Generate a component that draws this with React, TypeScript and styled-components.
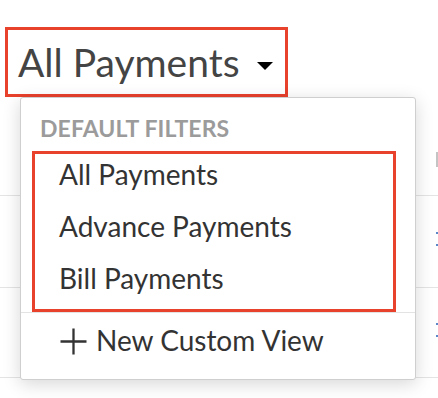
import React from "react";
import styled, { createGlobalStyle } from "styled-components";

const GlobalStyle = createGlobalStyle`
  html, body { margin: 0; padding: 0; background: #fff; }
  body { font-family: Lato, "Open Sans", sans-serif; }
`;

const Page = styled.div`
  position: relative;
  width: 438px;
  height: 398px;
  overflow: hidden;
  background: #fff;
`;

const Header = styled.div`
  display: flex;
  padding: 27px 0 0 5px;
`;

const TitleButton = styled.div`
  display: flex;
  align-items: center;
  height: 64px;
  padding: 0 12px 0 10px;
  border: 3px solid #e8412c;
  color: #444;
  font-size: 39px;
  line-height: 1;
`;

const TitleText = styled.span`
  display: block;
`;

const Caret = styled.span`
  width: 0;
  height: 0;
  margin: 8px 0 0 17px;
  border-left: 8px solid transparent;
  border-right: 8px solid transparent;
  border-top: 8px solid #000;
`;

const Table = styled.div`
  display: flex;
  flex-direction: column;
`;

const Row = styled.div<{ $h: number }>`
  display: flex;
  justify-content: flex-end;
  height: ${(p) => p.$h}px;
  box-sizing: border-box;
  border-bottom: 1px solid #e4e4e4;
`;

const Edge = styled.div<{ $top: number }>`
  display: flex;
  flex-direction: column;
  gap: 10px;
  width: 2px;
  padding-top: ${(p) => p.$top}px;
`;

const GrayMark = styled.span`
  width: 2px;
  height: 15px;
  background: #c4c4c4;
`;

const BlueDot = styled.span`
  width: 2px;
  height: 2px;
  background: #5b86c8;
`;

const Menu = styled.div`
  position: absolute;
  left: 20px;
  top: 97px;
  width: 396px;
  height: 283px;
  box-sizing: border-box;
  background: #fff;
  border: 1px solid #cfcfcf;
  border-radius: 3px;
  box-shadow: 0 4px 18px rgba(0, 0, 0, 0.16);
  display: flex;
  flex-direction: column;
`;

const GroupLabel = styled.div`
  padding: 16px 0 0 19px;
  font-size: 23px;
  line-height: 28px;
  font-weight: 700;
  color: #9b9b9b;
  letter-spacing: 0.1px;
`;

const Group = styled.div`
  display: flex;
  flex-direction: column;
  gap: 12px;
  margin: 9px 19px 0 11px;
  padding: 0 0 11px 24px;
  border: 3px solid #e8412c;
`;

const Item = styled.div`
  font-size: 28px;
  line-height: 40px;
  color: #333;
`;

const Footer = styled.div`
  display: flex;
  align-items: center;
  gap: 9px;
  padding: 7px 0 0 39px;
  border-top: 1px solid #e3e3e3;
  font-size: 28px;
  line-height: 40px;
  color: #333;
`;

const PlusIcon = () => (
  <svg width="27" height="27" viewBox="0 0 27 27" style={{ marginTop: 2 }}>
    <path d="M13.5 0.5V26.5M0.5 13.5H26.5" stroke="#333" strokeWidth="2.3" fill="none" />
  </svg>
);

export default function App() {
  return (
    <>
      <GlobalStyle />
      <Page>
        <Header>
          <TitleButton>
            <TitleText>All Payments</TitleText>
            <Caret />
          </TitleButton>
        </Header>
        <Table>
          <Row $h={99}>
            <Edge $top={55}>
              <GrayMark />
            </Edge>
          </Row>
          <Row $h={92}>
            <Edge $top={36}>
              <BlueDot />
              <BlueDot />
            </Edge>
          </Row>
          <Row $h={90}>
            <Edge $top={35}>
              <BlueDot />
              <BlueDot />
            </Edge>
          </Row>
        </Table>
        <Menu>
          <GroupLabel>DEFAULT FILTERS</GroupLabel>
          <Group>
            <Item>All Payments</Item>
            <Item>Advance Payments</Item>
            <Item>Bill Payments</Item>
          </Group>
          <Footer>
            <PlusIcon />
            <span>New Custom View</span>
          </Footer>
        </Menu>
      </Page>
    </>
  );
}
